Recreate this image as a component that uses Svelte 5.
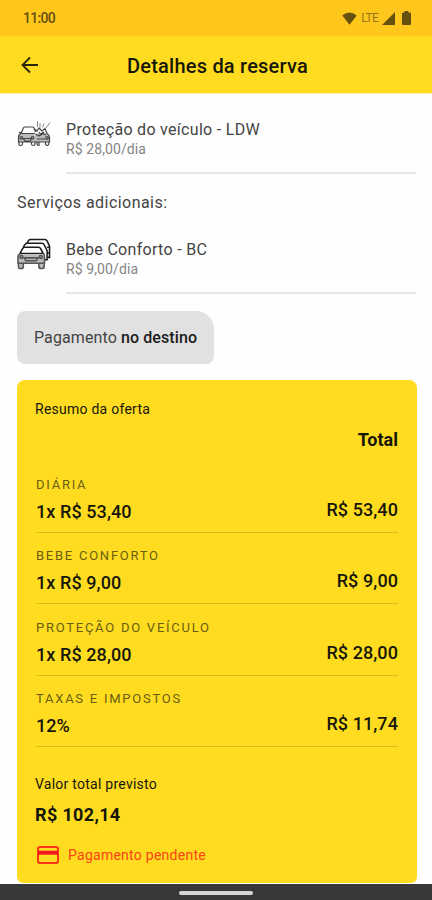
<script>
  let services = [
    { group: "protection", name: "Proteção do veículo - LDW", price: "R$ 28,00/dia" },
    { group: "extra", name: "Bebe Conforto - BC", price: "R$ 9,00/dia" },
  ];

  let rows = [
    { label: "Diária", detail: "1x R$ 53,40", total: "R$ 53,40" },
    { label: "Bebe Conforto", detail: "1x R$ 9,00", total: "R$ 9,00" },
    { label: "Proteção do veículo", detail: "1x R$ 28,00", total: "R$ 28,00" },
    { label: "Taxas e impostos", detail: "12%", total: "R$ 11,74" },
  ];
</script>

<div class="screen">
  <div class="status">
    <span class="clock">11:00</span>
    <div class="signals">
      <svg width="15" height="13" viewBox="0 0 15 13"><path d="M0.3 3.4 Q7.5 -2.6 14.7 3.4 L7.5 12.8 Z" /></svg>
      <span class="lte">LTE</span>
      <svg class="cell" width="13" height="13" viewBox="0 0 13 13"><path d="M0 13 L13 0 V13 Z" /></svg>
      <svg class="battery" width="9" height="14" viewBox="0 0 9 14"><path d="M2.6 0 H6.4 V1.6 H8 Q9 1.6 9 2.6 V13 Q9 14 8 14 H1 Q0 14 0 13 V2.6 Q0 1.6 1 1.6 H2.6 Z" /></svg>
    </div>
  </div>

  <header>
    <svg class="back" width="18" height="18" viewBox="0 0 18 18"><path d="M17 9 H1.8 M9 1.5 L1.5 9 L9 16.5" /></svg>
    <h1>Detalhes da reserva</h1>
  </header>

  <main>
    {#each services as service}
      {#if service.group == "extra"}
        <h2>Serviços adicionais:</h2>
      {/if}
      <div class="service">
        {#if service.group == "protection"}
          <!-- two cars side by side, the right one damaged -->
          <svg class="car crash" width="34" height="28" viewBox="0 0 34 28">
            <path class="body" d="M1.5 17 Q1.5 14 4 13.5 L17 13.5 L18 17 V22 H1.5 Z M18 15 L20 13.5 H30 Q32.5 14.5 32.5 17 V22 H18 Z" />
            <path d="M4 13.5 L6.3 8 Q7 7 8 7 H15.5 Q16.5 7 17 8 L18.5 12 M2 12 L4 13.5 H18 M4 13.5 Q1.5 14.5 1.5 17 V22 H17.5 M6.3 18.5 L8 21 H13 L14.5 18.5 Z" />
            <path d="M17.5 9 L20 11 L22 8 L25 11 L28 8.5 L30 13.5 Q32.5 15 32.5 17.5 V22 H17.5 M18.5 14 L22 16 L25 13 L29 15 M20 19 H28 M22 12 L24 15 L27 12" />
            <path d="M2 22 V24.5 Q2 25.5 3.8 25.5 Q5.5 25.5 5.5 24 V22 M14.5 22 V24 Q14.5 25.5 16.5 25.5 Q18 25.5 18 24 V22 M20 22 V24 Q20 25.5 22 25.5 V22 M28.5 22 V24.5 Q29 25.5 30.5 25.5 Q32 25 32 22" />
            <path class="thin" d="M20.5 1 V7 M23 3 V7.5 M25.5 7.5 L27 3.5 M29 8 L33 2.5" />
            <circle cx="4.3" cy="17.8" r="1.3" /><circle cx="15.5" cy="17.8" r="1.3" /><circle cx="30" cy="18" r="1.3" />
          </svg>
        {:else}
          <!-- three stacked cars -->
          <svg class="car" width="34" height="32" viewBox="0 0 35 32">
            <path d="M10.5 4.5 L12 2 Q12.5 1 14 1 H28.5 Q30.5 1 31 2.5 L33.5 8 V19.5 H31.5" />
            <path d="M6.5 8.5 L8.5 5.8 Q9 5 10.5 5 H25.5 Q27.5 5 28 6.5 L31 12.5 V22 H28.5 M31 9 H33.5 M31 15 H33.5" />
            <path class="body" d="M2 17 Q1 18 1 19.5 V25.5 H28 V19.5 Q28 18 26.5 17 Z M1 25.5 H6.5 V31 H2 Z M22.5 25.5 H28 V31 H23 Z" />
            <path d="M3 15.5 L6 10 Q6.8 9 8 9 H22 Q23.5 9 24.2 10.2 L27 15.5 H3" />
            <path class="soft" d="M3 15.5 Q1 17 1 19 V25.5 H28.3 V19 Q28.3 17 27 15.5 M7.5 20 H21.5 L20 23 H9 Z" />
            <path class="soft" d="M1.5 25.5 V29 Q1.5 31 4 31 Q6.5 31 6.5 28.5 V25.5 M22.5 25.5 V28.5 Q22.5 31 25 31 Q28 31 28 28.5 V25.5" />
            <circle class="soft" cx="4.5" cy="19" r="1.5" /><circle class="soft" cx="24.5" cy="19" r="1.5" />
          </svg>
        {/if}
        <div class="info">
          <p class="name">{service.name}</p>
          <p class="price">{service.price}</p>
        </div>
      </div>
    {/each}

    <div class="payment">Pagamento <b>no destino</b></div>

    <section class="summary">
      <h3>Resumo da oferta</h3>
      <p class="total-title">Total</p>
      {#each rows as row}
        <div class="row">
          <div>
            <p class="label">{row.label}</p>
            <p class="detail">{row.detail}</p>
          </div>
          <p class="amount">{row.total}</p>
        </div>
      {/each}
      <p class="expected">Valor total previsto</p>
      <p class="grand">R$ 102,14</p>
      <div class="pending">
        <svg width="22" height="18" viewBox="0 0 22 18">
          <rect x="1" y="1" width="20" height="16" rx="2" />
          <path d="M1 6.7 H21" />
        </svg>
        <span>Pagamento pendente</span>
      </div>
    </section>
  </main>

  <div class="navbar"><span class="pill"></span></div>
</div>

<style>
  :global(body) {
    background: #fff;
  }

  .screen {
    width: 432px;
    height: 900px;
    overflow: hidden;
    display: flex;
    flex-direction: column;
    font-family: Roboto, sans-serif;
    color: #17160a;
    background: #fefefe;
  }

  p, h1, h2, h3 {
    margin: 0;
    font-weight: 400;
  }

  .status {
    height: 36px;
    flex: none;
    box-sizing: border-box;
    padding: 0 21px 0 23px;
    display: flex;
    align-items: center;
    justify-content: space-between;
    background: #ffc71c;
    color: #65500f;
  }

  .clock {
    font-size: 14px;
    font-weight: 500;
    letter-spacing: -0.7px;
  }

  .signals {
    display: flex;
    align-items: center;
    fill: #65500f;
  }

  .lte {
    margin: 0 4px 0 4px;
    font-size: 12px;
    letter-spacing: -0.7px;
    color: #96751a;
  }

  .battery {
    margin-left: 7px;
  }

  header {
    height: 57px;
    flex: none;
    display: flex;
    align-items: center;
    background: #ffdc20;
    border-bottom: 1px solid #fff0a0;
  }

  .back {
    margin-left: 21px;
    fill: none;
    stroke: #2b260c;
    stroke-width: 1.8;
  }

  h1 {
    margin: 2px 0 0 88px;
    font-size: 20px;
    font-weight: 500;
    line-height: 24px;
    letter-spacing: 0.22px;
  }

  main {
    flex: 1;
    min-height: 0;
    overflow: hidden;
    padding: 0 15px 0 17px;
  }

  .service {
    display: flex;
    align-items: flex-start;
  }

  .car {
    flex: none;
    margin-top: 24px;
    fill: none;
    stroke: #1c1c1c;
    stroke-width: 1.6;
  }

  .crash {
    margin-top: 26px;
    stroke: #444;
    stroke-width: 1.2;
  }

  .car .body {
    fill: #bbb;
    stroke: none;
  }

  .car .thin {
    stroke: #888;
    stroke-width: 1;
  }

  .car .soft {
    stroke: #555;
  }

  .info {
    flex: 1;
    height: 80px;
    margin: 0 1px 0 auto;
    max-width: 350px;
    border-bottom: 2px solid #e6e6e6;
    box-sizing: border-box;
    padding-top: 26px;
  }

  .name {
    font-size: 16px;
    line-height: 20px;
    letter-spacing: 0.3px;
    color: #444;
  }

  .price {
    font-size: 14px;
    line-height: 19px;
    letter-spacing: 0.1px;
    color: #858585;
  }

  h2 {
    padding: 19px 0 1px;
    font-size: 16px;
    line-height: 20px;
    letter-spacing: 0.45px;
    color: #444;
  }

  .payment {
    width: 197px;
    height: 53px;
    box-sizing: border-box;
    margin-top: 17px;
    padding-left: 17px;
    border-radius: 8px 18px 8px 8px;
    background: #e1e1e1;
    color: #444;
    font-size: 16px;
    line-height: 54px;
    letter-spacing: 0.1px;
    white-space: nowrap;
  }

  .payment b {
    font-weight: 500;
    color: #1c1c1c;
  }

  .summary {
    width: 400px;
    height: 503px;
    box-sizing: border-box;
    margin-top: 16px;
    padding: 20px 19px 0;
    border-radius: 8px 8px 6px 6px;
    background: #ffdc20;
  }

  h3, .expected {
    margin-left: -1px;
    font-size: 14px;
    line-height: 18px;
    letter-spacing: 0.25px;
  }

  .total-title {
    margin-top: 11px;
    text-align: right;
    font-size: 18px;
    font-weight: 700;
    line-height: 22px;
  }

  .row {
    display: flex;
    justify-content: space-between;
    align-items: flex-end;
    height: 71.3px;
    box-sizing: border-box;
    border-bottom: 1px solid #d9b91b;
    padding-bottom: 9px;
  }

  .total-title + .row {
    height: 82px;
  }

  .label {
    font-size: 13px;
    line-height: 18px;
    letter-spacing: 1.75px;
    text-transform: uppercase;
    color: #6a5c12;
  }

  .detail, .amount {
    font-size: 18px;
    font-weight: 500;
    line-height: 22px;
    letter-spacing: 0.08px;
  }

  .detail {
    margin-top: 7px;
  }

  .amount {
    margin-bottom: 2px;
  }

  .expected {
    margin-top: 28px;
  }

  .grand {
    margin: 11px 0 0 -1px;
    font-size: 18px;
    font-weight: 700;
    line-height: 22px;
    letter-spacing: 0.35px;
  }

  .pending {
    display: flex;
    align-items: center;
    margin: 20px 0 0 1px;
    color: #fb4316;
    font-size: 14px;
    letter-spacing: 0.26px;
  }

  .pending svg {
    margin-right: 9px;
    fill: none;
    stroke: #fb3416;
    stroke-width: 2;
  }

  .pending path {
    stroke: #f01820;
    stroke-width: 4;
  }

  .navbar {
    height: 16px;
    flex: none;
    display: flex;
    justify-content: center;
    align-items: center;
    background: #383838;
  }

  .pill {
    width: 74px;
    height: 4px;
    margin-top: 2px;
    border-radius: 2px;
    background: #d8d4d4;
  }
</style>
